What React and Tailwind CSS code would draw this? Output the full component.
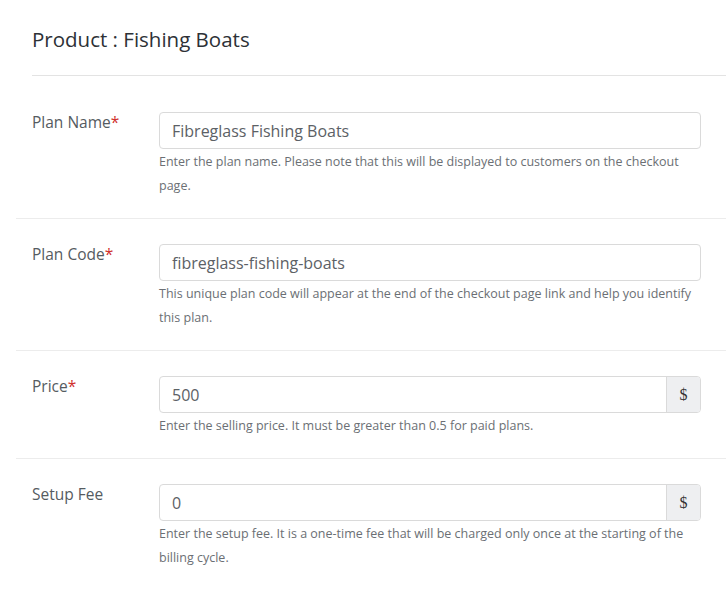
import React from 'react';

const fields = [
  {
    label: 'Plan Name',
    required: true,
    value: 'Fibreglass Fishing Boats',
    help: 'Enter the plan name. Please note that this will be displayed to customers on the checkout page.',
  },
  {
    label: 'Plan Code',
    required: true,
    value: 'fibreglass-fishing-boats',
    help: 'This unique plan code will appear at the end of the checkout page link and help you identify this plan.',
  },
  {
    label: 'Price',
    required: true,
    value: '500',
    addon: '$',
    help: 'Enter the selling price. It must be greater than 0.5 for paid plans.',
  },
  {
    label: 'Setup Fee',
    required: false,
    value: '0',
    addon: '$',
    help: 'Enter the setup fee. It is a one-time fee that will be charged only once at the starting of the billing cycle.',
  },
];

const FieldRow = ({ field, first }) => (
  <div className={`flex border-b border-[#ececec] pl-4 pr-[25px] pb-5 ${first ? 'pt-9' : 'pt-[25px]'}`}>
    <div className="w-[127px] shrink-0 text-[15.5px] leading-[21px] text-[#555b61]">
      {field.label}
      {field.required && <span className="text-[#d0312d]">*</span>}
    </div>
    <div className="flex-1">
      <div className="flex h-[37px] rounded border border-[#dadada] bg-white overflow-hidden">
        <div className="flex-1 flex items-center px-3 text-[16px] text-[#5c6166]">
          {field.value}
        </div>
        {field.addon && (
          <div className="w-[34px] flex items-center justify-center border-l border-[#dadada] bg-[#eeeff1] text-[16px] text-[#333] font-['Liberation_Serif',serif]">
            {field.addon}
          </div>
        )}
      </div>
      <p className="mt-px text-[12.5px] leading-6 text-[#6b6f74] pr-2">{field.help}</p>
    </div>
  </div>
);

export default function App() {
  return (
    <div className="w-[726px] h-[589px] bg-white font-['Open_Sans','Noto_Sans',sans-serif] overflow-hidden">
      <div className="pl-4">
        <div className="ml-4 pt-[25px] pb-[22px] border-b border-[#e3e3e3]">
          <h1 className="text-[20.5px] leading-7 text-[#2d3136]">Product : Fishing Boats</h1>
        </div>
        {fields.map((f, i) => (
          <FieldRow key={f.label} field={f} first={i === 0} />
        ))}
      </div>
    </div>
  );
}
